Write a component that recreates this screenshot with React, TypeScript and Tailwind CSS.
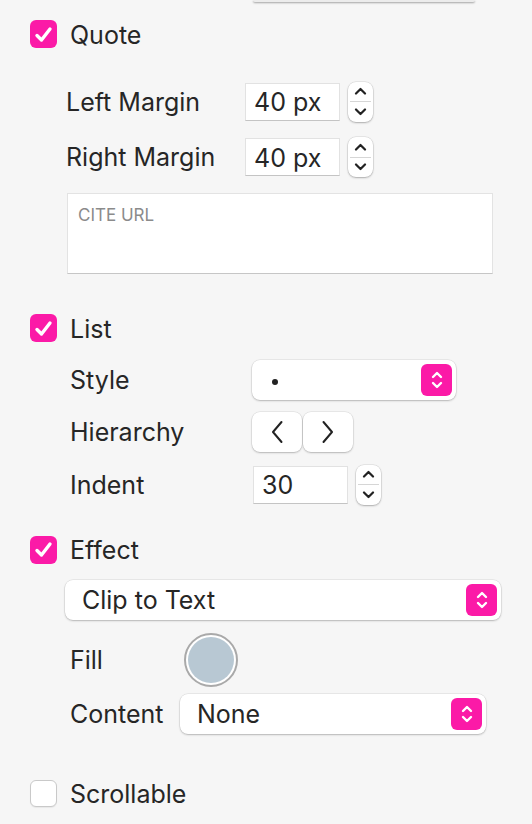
import React from "react";

const PINK = "bg-[#fb1aa7]";

function Check({ checked }: { checked: boolean }) {
    if (!checked) {
        return (
            <div className="w-[27px] h-[27px] rounded-[6px] bg-white border border-[#c9c9c9] shadow-[0_1px_1px_rgba(0,0,0,0.06)]" />
        );
    }
    return (
        <div className={`w-[27px] h-[28px] rounded-[6px] ${PINK} flex items-center justify-center`}>
            <svg width="19" height="17" viewBox="0 0 19 17" fill="none">
                <path d="M3 9.5 L7.5 14 L16 3" stroke="white" strokeWidth="3.4" strokeLinecap="round" strokeLinejoin="round" />
            </svg>
        </div>
    );
}

function Stepper() {
    return (
        <div className="w-[25px] h-[40px] rounded-[8px] bg-white shadow-[0_1px_2px_rgba(0,0,0,0.25),0_0_0_0.5px_rgba(0,0,0,0.12)] flex flex-col">
            <div className="flex-1 flex items-center justify-center">
                <svg width="13" height="8" viewBox="0 0 13 8" fill="none">
                    <path d="M2 6.5 L6.5 2 L11 6.5" stroke="#222" strokeWidth="2.2" strokeLinecap="round" strokeLinejoin="round" />
                </svg>
            </div>
            <div className="h-px bg-[#d6d6d6] mx-[2px]" />
            <div className="flex-1 flex items-center justify-center">
                <svg width="13" height="8" viewBox="0 0 13 8" fill="none">
                    <path d="M2 1.5 L6.5 6 L11 1.5" stroke="#222" strokeWidth="2.2" strokeLinecap="round" strokeLinejoin="round" />
                </svg>
            </div>
        </div>
    );
}

function NumberField({ value, w }: { value: string; w: string }) {
    return (
        <div className={`${w} h-[38px] bg-white border border-[#e2e2e2] border-b-[#c4c4c4] flex items-center pl-[8px] pt-[2px] leading-none`}>
            {value}
        </div>
    );
}

function PopupArrows() {
    return (
        <div className={`w-[31px] h-[32px] rounded-[6px] ${PINK} flex items-center justify-center`}>
            <svg width="14" height="22" viewBox="0 0 14 22" fill="none">
                <path d="M3 8 L7 4 L11 8" stroke="white" strokeWidth="2.4" strokeLinecap="round" strokeLinejoin="round" />
                <path d="M3 14 L7 18 L11 14" stroke="white" strokeWidth="2.4" strokeLinecap="round" strokeLinejoin="round" />
            </svg>
        </div>
    );
}

function Select({ text, w, pl }: { text: React.ReactNode; w: string; pl: string }) {
    return (
        <div className={`${w} h-[40px] rounded-[8px] bg-white shadow-[0_1px_2px_rgba(0,0,0,0.22),0_0_0_0.5px_rgba(0,0,0,0.1)] flex items-center justify-between ${pl} pr-[4px]`}>
            <span className="leading-none pt-[1px]">{text}</span>
            <PopupArrows />
        </div>
    );
}

function SegButton({ dir }: { dir: "left" | "right" }) {
    return (
        <div className="w-[50px] h-[40px] rounded-[8px] bg-white shadow-[0_1px_2px_rgba(0,0,0,0.22),0_0_0_0.5px_rgba(0,0,0,0.1)] flex items-center justify-center">
            <svg width="14" height="26" viewBox="0 0 14 26" fill="none">
                {dir === "left" ? (
                    <path d="M11.5 3 L3 13 L11.5 23" stroke="#222" strokeWidth="2" strokeLinecap="round" strokeLinejoin="round" />
                ) : (
                    <path d="M2.5 3 L11 13 L2.5 23" stroke="#222" strokeWidth="2" strokeLinecap="round" strokeLinejoin="round" />
                )}
            </svg>
        </div>
    );
}

export default function App() {
    return (
        <div
            className="w-[532px] h-[824px] overflow-hidden bg-[#f6f6f6] text-[25px] text-[#262626] flex flex-col"
            style={{ fontFamily: "Inter, 'Liberation Sans', sans-serif" }}
        >
            {/* clipped control above */}
            <div className="ml-[253px] w-[222px] h-[2px] bg-[#ececec] shadow-[0_1px_2px_rgba(0,0,0,0.35)] rounded-b-[4px]" />

            {/* Quote */}
            <div className="mt-[18px] h-[28px] flex items-center pl-[30px] gap-[13px]">
                <Check checked />
                <span className="pt-[3px]">Quote</span>
            </div>

            <div className="mt-[33px] h-[41px] flex items-center pl-[66px]">
                <span className="w-[179px] pt-[2px]">Left Margin</span>
                <NumberField value="40 px" w="w-[95px]" />
                <div className="ml-[8px]">
                    <Stepper />
                </div>
            </div>

            <div className="mt-[14px] h-[42px] flex items-center pl-[66px]">
                <span className="w-[179px] pt-[2px]">Right Margin</span>
                <NumberField value="40 px" w="w-[95px]" />
                <div className="ml-[8px]">
                    <Stepper />
                </div>
            </div>

            <div className="mt-[15px] ml-[67px] w-[426px] h-[81px] bg-white border border-[#e3e3e3] border-b-[#c6c6c6] px-[10px] pt-[13px] text-[17px] leading-none text-[#8b8b8b]">
                CITE URL
            </div>

            {/* List */}
            <div className="mt-[40px] h-[28px] flex items-center pl-[30px] gap-[13px]">
                <Check checked />
                <span className="pt-[3px]">List</span>
            </div>

            <div className="mt-[18px] h-[40px] flex items-center pl-[70px]">
                <span className="w-[182px] pt-[2px]">Style</span>
                <Select
                    w="w-[204px]"
                    pl="pl-[20px]"
                    text={<span className="inline-block w-[6px] h-[6px] rounded-full bg-[#222] align-middle" />}
                />
            </div>

            <div className="mt-[12px] h-[40px] flex items-center pl-[70px]">
                <span className="w-[182px] pt-[2px]">Hierarchy</span>
                <div className="flex gap-[1px]">
                    <SegButton dir="left" />
                    <SegButton dir="right" />
                </div>
            </div>

            <div className="mt-[12px] h-[41px] flex items-center pl-[70px]">
                <span className="w-[183px] pt-[2px]">Indent</span>
                <NumberField value="30" w="w-[95px]" />
                <div className="ml-[8px]">
                    <Stepper />
                </div>
            </div>

            {/* Effect */}
            <div className="mt-[31px] h-[27px] flex items-center pl-[30px] gap-[13px]">
                <Check checked />
                <span className="pt-[3px]">Effect</span>
            </div>

            <div className="mt-[17px] pl-[65px]">
                <Select w="w-[436px]" pl="pl-[17px]" text="Clip to Text" />
            </div>

            <div className="mt-[13px] h-[54px] flex items-center pl-[70px]">
                <span className="w-[114px] pt-[2px]">Fill</span>
                <div className="w-[54px] h-[54px] rounded-full border-2 border-[#a9a9a9] bg-white p-[2px]">
                    <div className="w-full h-full rounded-full bg-[#b8c8d3]" />
                </div>
            </div>

            <div className="mt-[6px] h-[41px] flex items-center pl-[70px]">
                <span className="w-[110px] pt-[2px]">Content</span>
                <Select w="w-[306px]" pl="pl-[17px]" text="None" />
            </div>

            {/* Scrollable */}
            <div className="mt-[46px] h-[27px] flex items-center pl-[30px] gap-[13px]">
                <Check checked={false} />
                <span className="pt-[3px]">Scrollable</span>
            </div>
        </div>
    );
}
